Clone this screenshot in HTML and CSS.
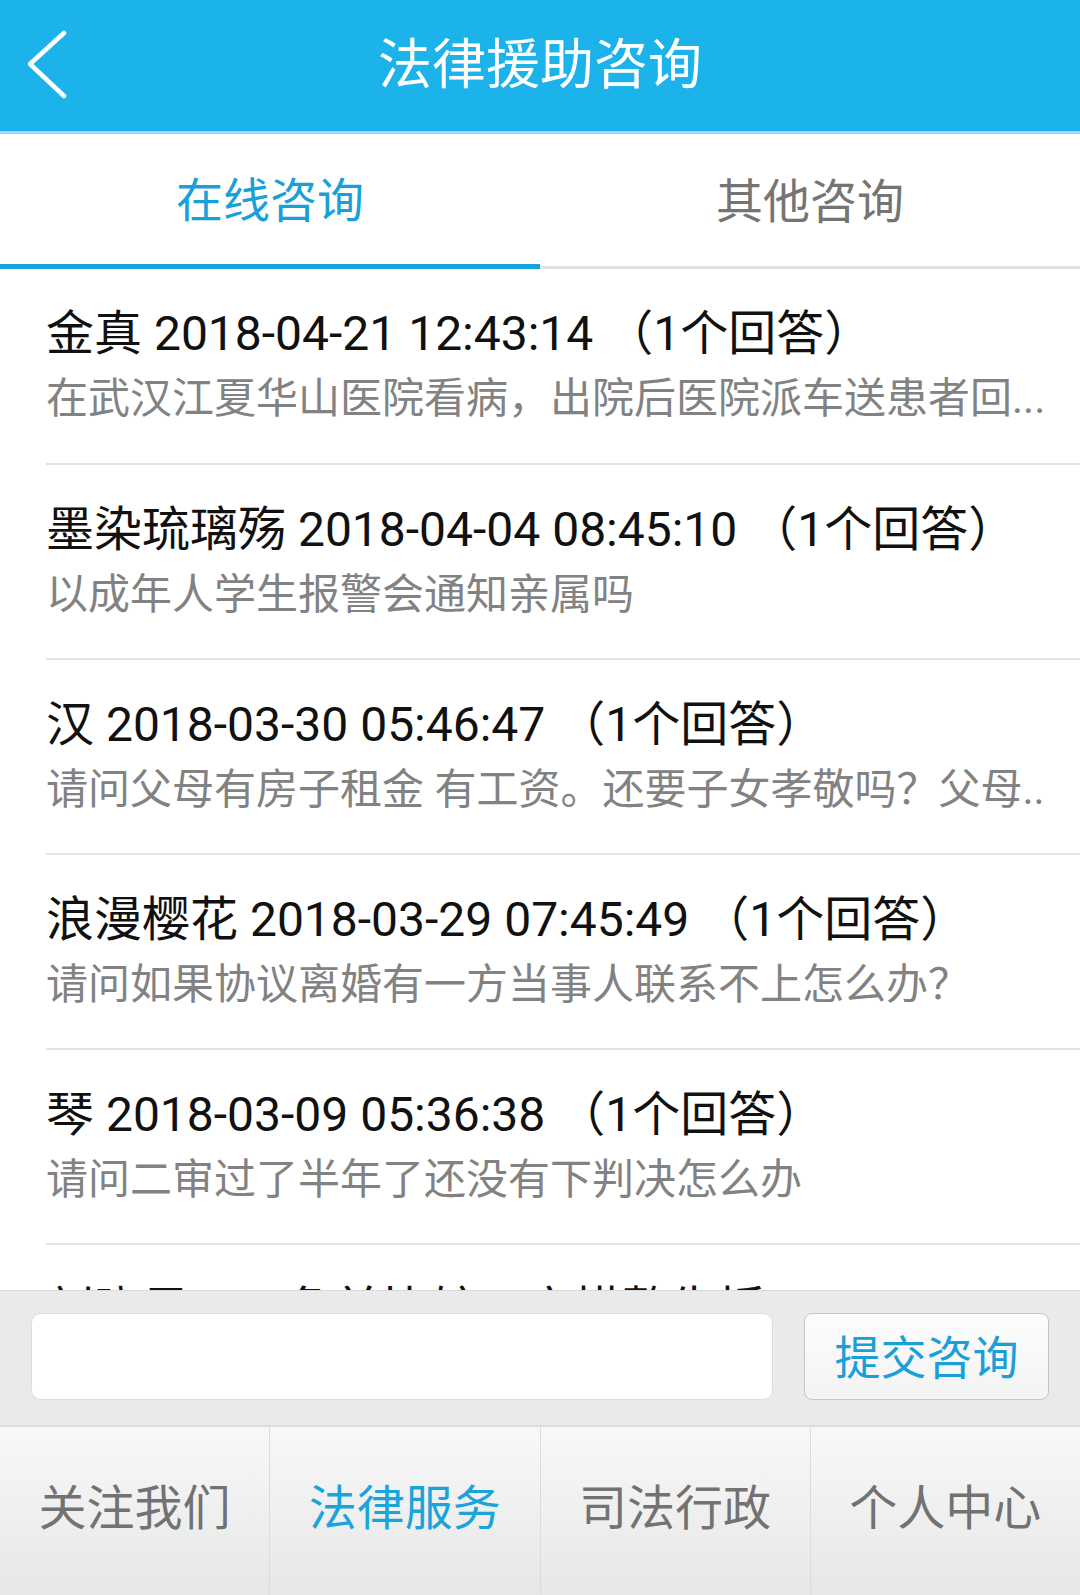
FILE: index.html
```html
<!DOCTYPE html>
<html lang="zh-CN">

<head>
    <meta charset="UTF-8">
    <meta name="viewport" content="width=device-width, initial-scale=1.0">
    <title>法律援助咨询</title>
    <link rel="stylesheet" href="styles.css">
</head>

<body>
    <header class="topbar">
        <a class="back" href="#">
            <svg width="44" height="72" viewBox="0 0 44 72">
                <polyline points="36,4 2,35 36,67" fill="none" stroke="#fff" stroke-width="4.5" stroke-linecap="round" stroke-linejoin="round" />
            </svg>
        </a>
        <h1>法律援助咨询</h1>
    </header>

    <nav class="tabs">
        <div class="tab active">在线咨询</div>
        <div class="tab">其他咨询</div>
    </nav>

    <ul class="list">
        <li class="item first">
            <div class="title">金真 2018-04-21 12:43:14 （1个回答）</div>
            <div class="desc">在武汉江夏华山医院看病，出院后医院派车送患者回...</div>
        </li>
        <li class="item">
            <div class="title">墨染琉璃殇 2018-04-04 08:45:10 （1个回答）</div>
            <div class="desc">以成年人学生报警会通知亲属吗</div>
        </li>
        <li class="item">
            <div class="title">汉 2018-03-30 05:46:47 （1个回答）</div>
            <div class="desc">请问父母有房子租金 有工资。还要子女孝敬吗？父母..</div>
        </li>
        <li class="item">
            <div class="title">浪漫樱花 2018-03-29 07:45:49 （1个回答）</div>
            <div class="desc">请问如果协议离婚有一方当事人联系不上怎么办？</div>
        </li>
        <li class="item">
            <div class="title">琴 2018-03-09 05:36:38 （1个回答）</div>
            <div class="desc">请问二审过了半年了还没有下判决怎么办</div>
        </li>
        <li class="item">
            <div class="title">刘晓风、三角并比较、宇描整生插！ 2017-12-11 09:21:05 （1个回答）</div>
            <div class="desc">请问</div>
        </li>
    </ul>

    <form class="ask">
        <input type="text" class="ask-input" aria-label="咨询内容">
        <button type="button" class="ask-btn">提交咨询</button>
    </form>

    <footer class="tabbar">
        <div class="tabbar-item">关注我们</div>
        <div class="tabbar-item active">法律服务</div>
        <div class="tabbar-item">司法行政</div>
        <div class="tabbar-item">个人中心</div>
    </footer>
</body>

</html>
```

FILE: styles.css
```css
html,
body {
    margin: 0;
    padding: 0;
}

body {
    width: 1080px;
    height: 1595px;
    overflow: hidden;
    display: flex;
    flex-direction: column;
    background-color: #fff;
    font-family: Roboto, 'Noto Sans CJK SC', sans-serif;
}

/* top bar */
.topbar {
    height: 131px;
    flex: none;
    background-color: #1cb3eb;
    border-bottom: 3px solid #a3daf3;
    display: flex;
    align-items: center;
    justify-content: center;
    position: relative;
}

.back {
    position: absolute;
    left: 28px;
    top: 29px;
    display: block;
    line-height: 0;
}

.topbar h1 {
    margin: 0 0 10px;
    font-family: 'Noto Sans CJK SC', sans-serif;
    font-weight: normal;
    font-size: 54px;
    color: #fff;
}

/* tabs */
.tabs {
    flex: none;
    display: flex;
    height: 135px;
}

.tab {
    flex: 1;
    display: flex;
    align-items: center;
    justify-content: center;
    padding-bottom: 5px;
    font-family: 'Noto Sans CJK SC', sans-serif;
    font-size: 47px;
    color: #747474;
    border-bottom: 3px solid #e2e2e2;
}

.tab.active {
    color: #1aa0d8;
    border-bottom: 5px solid #17a2dc;
}

/* list */
.list {
    flex: 1;
    min-height: 0;
    overflow: hidden;
    margin: 0;
    padding: 0;
    list-style: none;
}

.item {
    margin-left: 46px;
    padding: 35px 0 35px;
    border-bottom: 2px solid #e4e4e4;
}

.item.first {
    padding-bottom: 36px;
}

.title,
.desc {
    white-space: nowrap;
    overflow: hidden;
}

.title {
    font-size: 48px;
    line-height: 60px;
    height: 60px;
    color: #111;
}

.desc {
    margin-top: 7px;
    font-size: 42px;
    line-height: 56px;
    height: 56px;
    color: #828282;
}

/* ask panel */
.ask {
    flex: none;
    margin: 0;
    height: 137px;
    box-sizing: border-box;
    padding: 22px 31px 0;
    display: flex;
    gap: 31px;
    background-color: #e9eaeb;
    border-top: 1px solid #dadada;
    border-bottom: 2px solid #dcdcdc;
}

.ask-input {
    width: 742px;
    height: 87px;
    box-sizing: border-box;
    border: 1px solid #dedede;
    border-radius: 10px;
    background: #fff;
    outline: none;
}

.ask-btn {
    width: 245px;
    height: 87px;
    box-sizing: border-box;
    border: 1px solid #c6c6c6;
    border-radius: 8px;
    background: linear-gradient(#fdfdfd, #f3f3f3);
    font-family: 'Noto Sans CJK SC', sans-serif;
    font-size: 46px;
    color: #1a9fd7;
    padding: 0 0 6px;
}

/* bottom tab bar */
.tabbar {
    flex: none;
    height: 168px;
    display: flex;
    background: linear-gradient(#f8f8f8, #e7e7e7);
}

.tabbar-item {
    flex: 1;
    display: flex;
    align-items: center;
    justify-content: center;
    padding-bottom: 14px;
    font-family: 'Noto Sans CJK SC', sans-serif;
    font-size: 48px;
    color: #727272;
    border-left: 1px solid #dcdcdc;
}

.tabbar-item:first-child {
    border-left: none;
}

.tabbar-item.active {
    color: #1aa4dc;
}
```
